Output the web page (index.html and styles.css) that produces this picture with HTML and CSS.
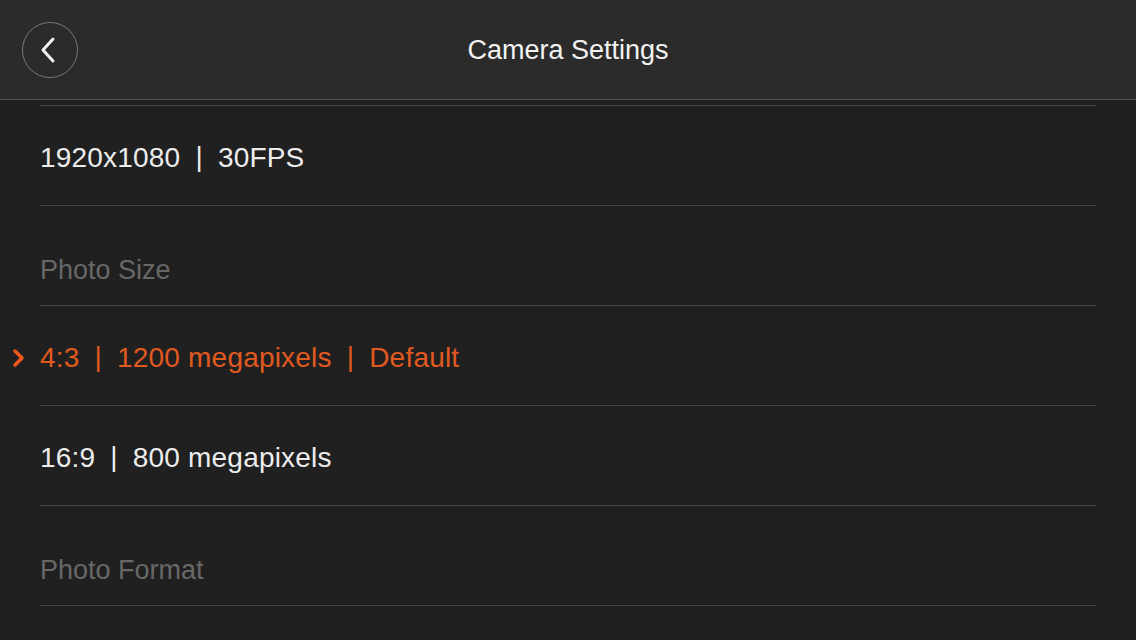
FILE: index.html
```html
<!DOCTYPE html>
<html lang="en">
<head>
    <meta charset="UTF-8">
    <meta name="viewport" content="width=device-width, initial-scale=1.0">
    <title>Camera Settings</title>
    <link rel="stylesheet" href="styles.css">
</head>
<body>
    <header class="topbar">
        <button class="back-btn" aria-label="Back">
            <svg width="18" height="28" viewBox="0 0 18 28">
                <path d="M14 3 L4 14 L14 25" fill="none" stroke="#f2f2f2" stroke-width="3" stroke-linecap="round" stroke-linejoin="round"/>
            </svg>
        </button>
        <h1>Camera Settings</h1>
    </header>

    <ul class="settings">
        <li class="option">1920x1080<span class="sep">|</span>30FPS</li>
        <li class="section">Photo Size</li>
        <li class="option selected">
            <svg class="check" width="14" height="20" viewBox="0 0 14 20">
                <path d="M3 3 L10 10 L3 17" fill="none" stroke="#f0571a" stroke-width="3.5" stroke-linecap="round" stroke-linejoin="round"/>
            </svg>
            4:3<span class="sep">|</span>1200 megapixels<span class="sep">|</span>Default
        </li>
        <li class="option">16:9<span class="sep">|</span>800 megapixels</li>
        <li class="section">Photo Format</li>
        <li class="option"></li>
    </ul>
</body>
</html>
```

FILE: styles.css
```css
* {
    margin: 0;
    padding: 0;
    box-sizing: border-box;
}

html, body {
    height: 100%;
    overflow: hidden;
}

body {
    font-family: "Liberation Sans", Arial, sans-serif;
    background: #202020;
    color: #ececec;
}

.topbar {
    height: 100px;
    background: #2b2b2b;
    border-bottom: 1px solid #555;
    display: flex;
    align-items: center;
    justify-content: center;
    position: relative;
}

.topbar h1 {
    font-size: 27px;
    font-weight: normal;
    color: #f2f2f2;
    margin-top: 2px;
}

.back-btn {
    position: absolute;
    left: 22px;
    top: 22px;
    width: 56px;
    height: 56px;
    border-radius: 50%;
    border: 1.5px solid #7a7a7a;
    background: transparent;
    display: flex;
    align-items: center;
    justify-content: center;
    padding-right: 4px;
    cursor: pointer;
}

.settings {
    list-style: none;
    margin: 5px 40px 0;
    border-top: 1px solid #484848;
}

.settings li {
    height: 100px;
    border-bottom: 1px solid #484848;
    display: flex;
    align-items: center;
    font-size: 28px;
    position: relative;
}

.settings .section {
    color: #686868;
    font-size: 27px;
    align-items: flex-end;
    padding-bottom: 19px;
}

.settings .option {
    padding-top: 4px;
    letter-spacing: 0.2px;
}

.settings .selected {
    color: #e0591f;
}

.sep {
    margin: 0 15px;
    position: relative;
    top: -1px;
}

.check {
    position: absolute;
    left: -28px;
    top: 42px;
}
```
